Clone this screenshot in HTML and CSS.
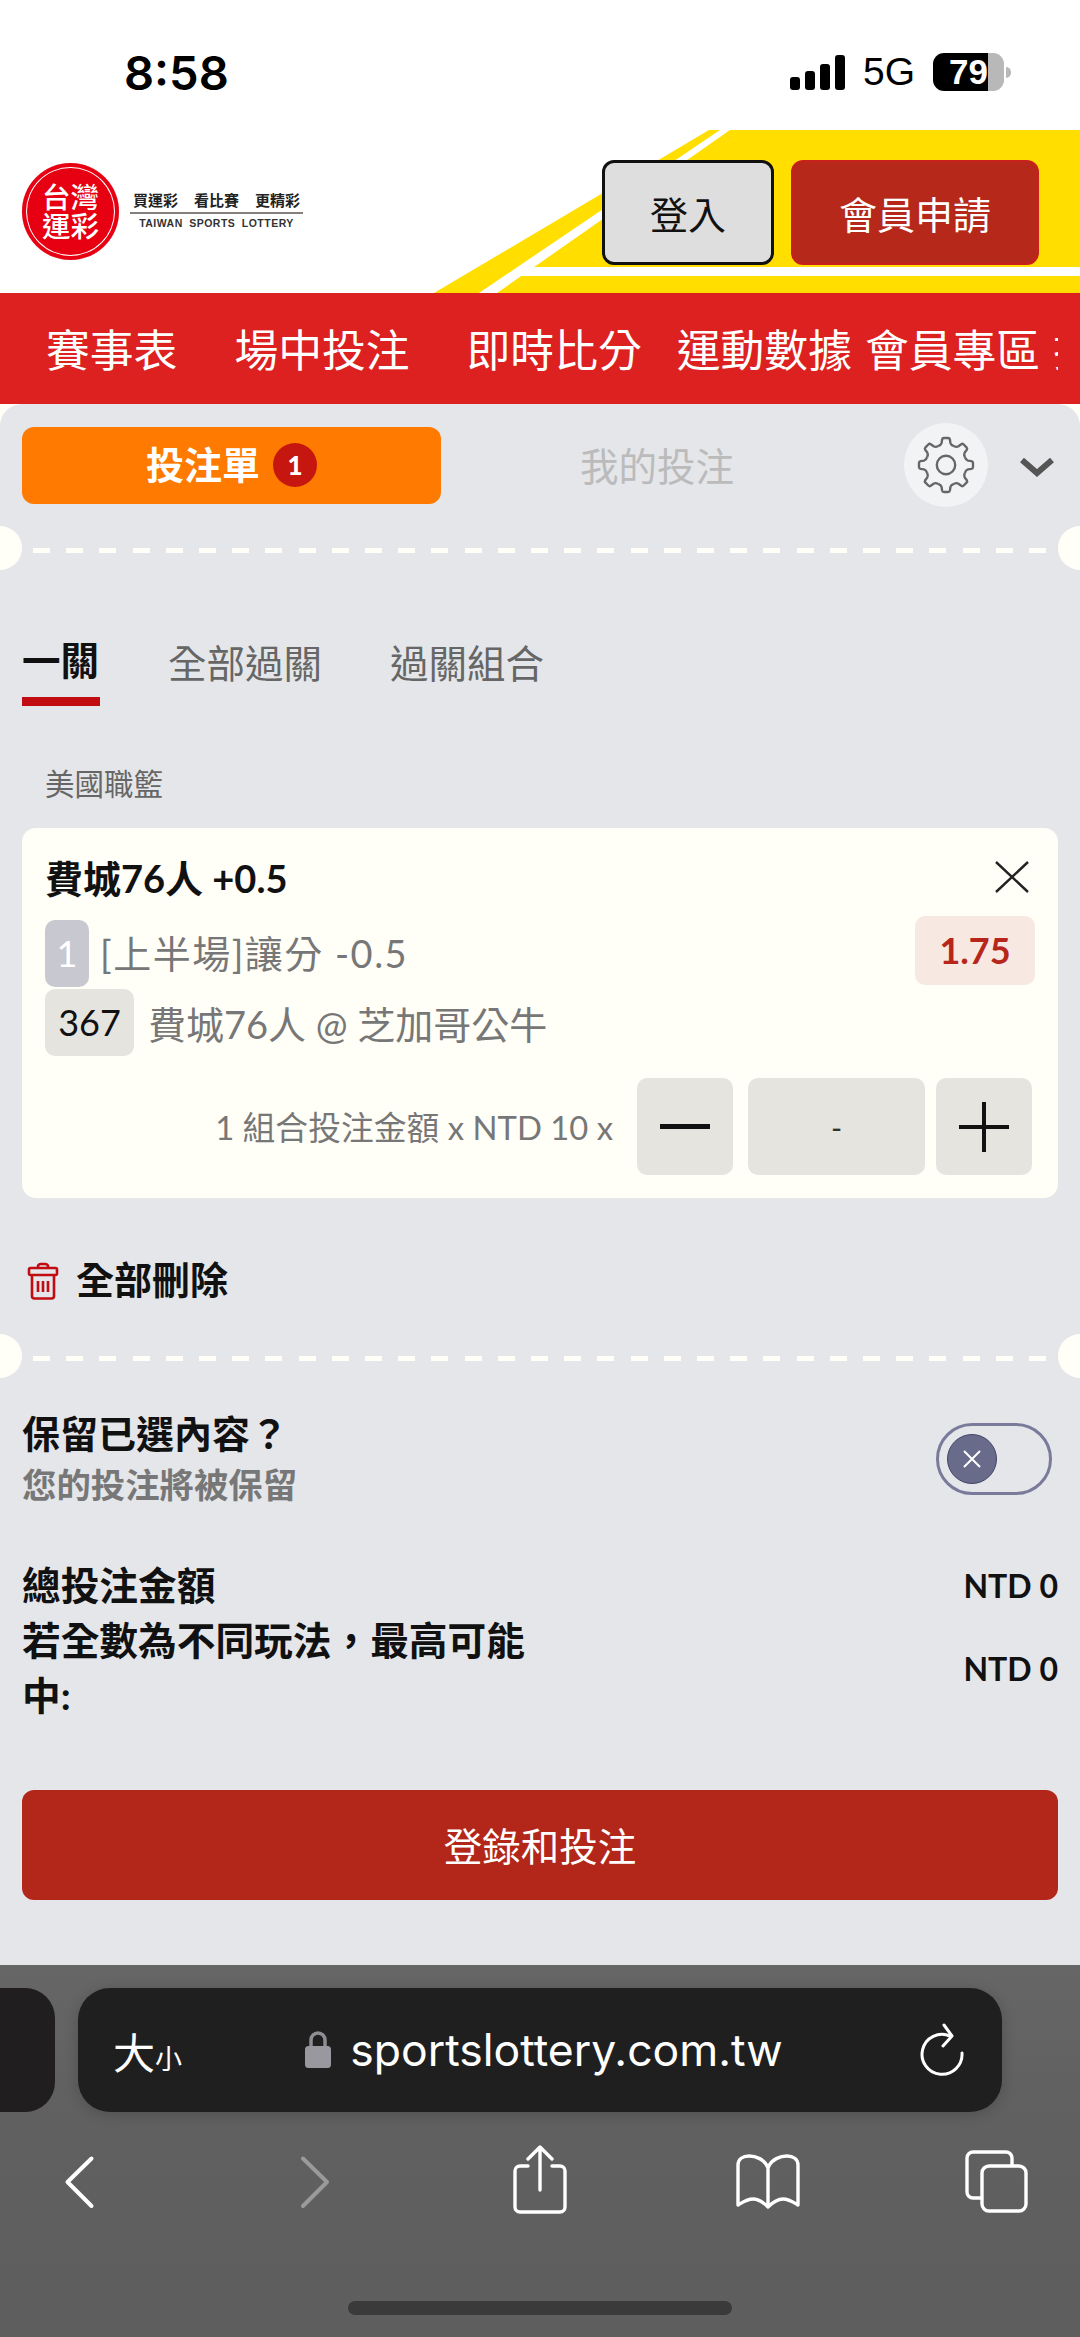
FILE: index.html
```html
<!DOCTYPE html>
<html lang="zh-Hant">
<head>
  <meta charset="UTF-8" />
  <title>台灣運彩 投注單</title>
  <link rel="stylesheet" href="styles.css">
</head>
<body>

  <div class="status-bar">
    <span class="clock">8:58</span>
    <div class="status-right">
      <div class="signal">
        <i class="bar-1"></i><i class="bar-2"></i><i class="bar-3"></i><i class="bar-4"></i>
      </div>
      <span class="network">5G</span>
      <div class="battery"><span>79</span></div>
      <i class="battery-tip"></i>
    </div>
  </div>

  <header class="site-header">
    <svg class="header-art" width="1080" height="163" viewBox="0 0 1080 163">
      <polygon points="709,0 720,0 479,163 434,163" fill="#ffde00" />
      <polygon points="730,0 1080,0 1080,163 497,163" fill="#ffde00" />
      <polygon points="527,137 1080,137 1080,146 515,146" fill="#fff" />
    </svg>
    <div class="logo">
      <div class="logo-mark"><span>台灣</span><span>運彩</span></div>
      <div class="logo-text">
        <div class="logo-slogan"><span>買運彩</span><span>看比賽</span><span>更精彩</span></div>
        <div class="logo-en">TAIWAN SPORTS LOTTERY</div>
      </div>
    </div>
    <div class="header-actions">
      <button class="btn-login">登入</button>
      <button class="btn-join">會員申請</button>
    </div>
  </header>

  <nav class="main-nav">
    <a class="nav-wide">賽事表</a>
    <a class="nav-wide">場中投注</a>
    <a class="nav-mid">即時比分</a>
    <a class="nav-tight">運動數據</a>
    <a class="nav-tight">會員專區</a>
    <a>投注記錄</a>
  </nav>

  <main class="slip">
    <div class="slip-tabs">
      <div class="slip-tab-active"><span>投注單</span><b class="count">1</b></div>
      <div class="slip-tab">我的投注</div>
      <div class="gear">
        <svg width="60" height="60" viewBox="-30 -30 60 60" fill="none" stroke="#666" stroke-width="2.4">
          <defs>
            <path id="tooth" d="M-7.85-18.94Q-5-19.8-4.4-22L-3.9-25.5Q-3.6-27-2-27H2Q3.6-27 3.9-25.5L4.4-22Q5-19.8 7.85-18.94" />
          </defs>
          <use href="#tooth" />
          <use href="#tooth" transform="rotate(45)" />
          <use href="#tooth" transform="rotate(90)" />
          <use href="#tooth" transform="rotate(135)" />
          <use href="#tooth" transform="rotate(180)" />
          <use href="#tooth" transform="rotate(225)" />
          <use href="#tooth" transform="rotate(270)" />
          <use href="#tooth" transform="rotate(315)" />
          <circle r="9.2" />
        </svg>
      </div>
      <svg class="chevron" width="34" height="20" viewBox="0 0 34 20" fill="none" stroke="#555" stroke-width="6">
        <path d="M2 3L17 16L32 3" />
      </svg>
    </div>

    <div class="divider first"></div>

    <div class="bet-types">
      <div class="bet-type-active">一關</div>
      <div class="bet-type">全部過關</div>
      <div class="bet-type">過關組合</div>
    </div>

    <div class="league">美國職籃</div>

    <section class="bet-card">
      <div class="bet-title-row">
        <div class="bet-title">費城76人 +0.5</div>
        <svg width="36" height="34" viewBox="0 0 36 34" fill="none" stroke="#222" stroke-width="2.4">
          <path d="M2 2L34 32M34 2L2 32" />
        </svg>
      </div>
      <div class="bet-row">
        <span class="tag tag-period">1</span>
        <span class="bet-market spaced">[上半場]讓分 -0.5</span>
        <span class="odds">1.75</span>
      </div>
      <div class="bet-row second">
        <span class="tag tag-game">367</span>
        <span class="bet-market">費城76人 @ 芝加哥公牛</span>
      </div>
      <div class="stake-row">
        <span class="stake-label">1 組合投注金額 x NTD 10 x</span>
        <div class="stake-btn">
          <svg width="50" height="6" viewBox="0 0 50 6"><rect width="50" height="5" fill="#111" /></svg>
        </div>
        <div class="stake-value">-</div>
        <div class="stake-btn">
          <svg width="50" height="50" viewBox="0 0 50 50"><path d="M0 25H50M25 0V50" stroke="#111" stroke-width="4" /></svg>
        </div>
      </div>
    </section>

    <div class="delete-all">
      <svg width="32" height="38" viewBox="0 0 32 38" fill="none" stroke="#c00d12" stroke-width="2.6">
        <path d="M11 6V4a3 3 0 0 1 3-2h4a3 3 0 0 1 3 2V6" />
        <rect x="2" y="6" width="28" height="7" rx="1.5" />
        <path d="M5 13V34a2.500 2.500 0 0 0 2.500 2.500H24.500A2.500 2.500 0 0 0 27 34V13" />
        <path d="M11 19V30M16 19V30M21 19V30" />
      </svg>
      <span>全部刪除</span>
    </div>

    <div class="divider"></div>

    <div class="keep-row">
      <div>
        <div class="keep-title">保留已選內容？</div>
        <div class="keep-sub">您的投注將被保留</div>
      </div>
      <div class="toggle">
        <div class="toggle-knob">
          <svg width="20" height="20" viewBox="0 0 20 20" stroke="#fff" stroke-width="2"><path d="M2 2L18 18M18 2L2 18" /></svg>
        </div>
      </div>
    </div>

    <div class="totals">
      <div class="total-row">
        <div class="total-label">總投注金額</div>
        <div class="total-value">NTD 0</div>
      </div>
      <div class="total-row">
        <div class="total-label">若全數為不同玩法，最高可能中:</div>
        <div class="total-value">NTD 0</div>
      </div>
    </div>

    <button class="submit">登錄和投注</button>
  </main>

  <footer class="browser-bar">
    <div class="address-row">
      <div class="prev-tab"></div>
      <div class="address">
        <span class="text-size">大<small>小</small></span>
        <div class="url">
          <svg width="26" height="38" viewBox="0 0 26 38">
            <path d="M6 17V9a7 7 0 0 1 14 0V17" fill="none" stroke="#8d8d92" stroke-width="3.5" />
            <rect y="15" width="26" height="22" rx="3.500" fill="#98989e" />
          </svg>
          <span>sportslottery.com.tw</span>
        </div>
        <svg width="46" height="54" viewBox="0 0 46 54" fill="none" stroke="#fff" stroke-width="3" stroke-linecap="round" stroke-linejoin="round">
          <path d="M30 13A20 20 0 1 0 42 30" />
          <path d="M24 2L32 13L23 23" />
        </svg>
      </div>
    </div>
    <div class="toolbar">
      <svg width="66" height="70" viewBox="0 0 66 70" fill="none" stroke="#fff" stroke-width="4" stroke-linecap="round" stroke-linejoin="round">
        <path d="M44.500 13.500L20.500 37L44.500 61" />
      </svg>
      <svg width="66" height="70" viewBox="-6 0 66 70" fill="none" stroke="#9a9a9a" stroke-width="4" stroke-linecap="round" stroke-linejoin="round">
        <path d="M21 13.500L45 37L21 61" />
      </svg>
      <svg width="66" height="70" viewBox="-2 0 66 70" fill="none" stroke="#fff" stroke-width="3.400" stroke-linecap="round" stroke-linejoin="round">
        <path d="M33 45V3M21 14L33 2L45 14" />
        <path d="M21 21H13a5 5 0 0 0-5 5V62a5 5 0 0 0 5 5H53a5 5 0 0 0 5-5V26a5 5 0 0 0-5-5H45" />
      </svg>
      <svg width="66" height="70" viewBox="-1 0 66 70" fill="none" stroke="#fff" stroke-width="3.400" stroke-linecap="round" stroke-linejoin="round">
        <path d="M33 23C30 14 20 11 14 11C8 11 3 14 3 20V60C8 57 12 54 18 54C24 54 29 58 33 62C37 58 42 54 48 54C54 54 58 57 63 60V20C63 14 58 11 52 11C46 11 36 14 33 23ZM33 23V62" />
      </svg>
      <svg width="66" height="70" viewBox="0 0 66 70" fill="none" stroke="#fff" stroke-width="3.400" stroke-linecap="round" stroke-linejoin="round">
        <path d="M18 53H10a6 6 0 0 1-6-6V13a6 6 0 0 1 6-6H43a6 6 0 0 1 6 6V20" />
        <rect x="19" y="21" width="44" height="45" rx="7" />
      </svg>
    </div>
    <div class="home-indicator"></div>
  </footer>

</body>
</html>
```

FILE: styles.css
```css
* {
  box-sizing: border-box;
}
body {
  margin: 0;
  width: 1080px;
  height: 2337px;
  overflow: hidden;
  background: #fffef7;
  font-family: Lato, "Noto Sans CJK TC", sans-serif;
  color: #111;
}
button {
  font-family: inherit;
  cursor: pointer;
}

/* status bar */
.status-bar {
  display: flex;
  justify-content: space-between;
  align-items: center;
  height: 130px;
  padding: 14px 69px 0 124px;
  background: #fff;
}
.clock {
  font-family: Inter, sans-serif;
  font-weight: 600;
  font-size: 47px;
  color: #000;
}
.status-right {
  display: flex;
  align-items: center;
}
.signal {
  display: flex;
  align-items: flex-end;
  gap: 5px;
  height: 35px;
  margin-right: 18px;
}
.signal i {
  display: block;
  width: 10px;
  background: #000;
  border-radius: 3px;
}
.bar-1 { height: 13px; }
.bar-2 { height: 19px; }
.bar-3 { height: 26px; }
.bar-4 { height: 35px; }
.network {
  font-family: "Liberation Sans", sans-serif;
  font-size: 39px;
  line-height: 40px;
  color: #000;
  margin-right: 18px;
}
.battery {
  width: 71px;
  height: 38px;
  border-radius: 11px;
  overflow: hidden;
  background: linear-gradient(90deg, #000 55px, #b8b8b8 55px);
  color: #fff;
  font-family: "Liberation Sans", sans-serif;
  font-weight: 700;
  font-size: 35px;
  line-height: 38px;
  padding-left: 16px;
}
.battery-tip {
  width: 5px;
  height: 11px;
  margin-left: 2px;
  background: #b8b8b8;
  border-radius: 0 5px 5px 0;
}

/* site header */
.site-header {
  position: relative;
  display: flex;
  justify-content: space-between;
  height: 163px;
  padding: 30px 41px 0 22px;
  background: #fff;
}
.header-art {
  position: absolute;
  left: 0;
  top: 0;
}
.logo {
  position: relative;
  display: flex;
  align-items: flex-start;
  padding-top: 3px;
}
.logo-mark {
  display: flex;
  flex-direction: column;
  align-items: center;
  justify-content: center;
  width: 97px;
  height: 97px;
  border-radius: 50%;
  background: #e60012;
  box-shadow: inset 0 0 0 4px #e60012, inset 0 0 0 5px #fff;
  color: #fff;
  font-size: 28.500px;
  line-height: 29px;
  font-weight: 500;
}
.logo-text {
  width: 173px;
  margin: 27px 0 0 11px;
}
.logo-slogan {
  display: flex;
  justify-content: space-between;
  padding: 0 3px 2px;
  font-size: 15px;
  line-height: 20px;
  font-weight: 700;
  color: #222;
  border-bottom: 2px solid #857f7c;
}
.logo-en {
  font-family: "Liberation Sans", sans-serif;
  font-weight: 700;
  font-size: 10.500px;
  letter-spacing: 0.5px;
  word-spacing: 3px;
  line-height: 18px;
  text-align: center;
  white-space: nowrap;
  color: #333;
}
.header-actions {
  position: relative;
  display: flex;
  gap: 17px;
}
.btn-login,
.btn-join {
  height: 105px;
  border-radius: 12px;
  font-size: 38px;
  padding: 0;
}
.btn-login {
  width: 172px;
  background: #dedede;
  border: 3px solid #111;
  color: #111;
}
.btn-join {
  width: 248px;
  background: #b5281a;
  border: 2px solid #c9201c;
  color: #fff;
}

/* red nav */
.main-nav {
  display: flex;
  align-items: center;
  height: 111px;
  padding: 0 0 2px 46px;
  margin-right: 22px;
  background: #dd2020;
  overflow: hidden;
  white-space: nowrap;
  box-shadow: 22px 0 0 #dd2020;
  color: #fff;
  font-size: 43.800px;
}
.main-nav a {
  flex: none;
}
.nav-wide { margin-right: 57px; }
.nav-mid { margin-right: 35px; }
.nav-tight { margin-right: 13px; }

/* bet slip sheet */
.slip {
  height: 1561px;
  background: #e4e6e9;
  border-radius: 22px 22px 0 0;
  overflow: hidden;
}
.slip-tabs {
  display: flex;
  align-items: center;
  height: 84px;
  margin-top: 19px;
  padding-left: 22px;
}
.slip-tab-active {
  display: flex;
  justify-content: center;
  align-items: center;
  gap: 13px;
  width: 419px;
  height: 77px;
  border-radius: 12px;
  background: #ff7a00;
  color: #fff;
  font-size: 38px;
  font-weight: 700;
}
.slip-tab-active span {
  margin-bottom: 5px;
}
.count {
  width: 44px;
  height: 44px;
  border-radius: 50%;
  background: #c5170f;
  font-size: 26px;
  line-height: 44px;
  text-align: center;
}
.slip-tab {
  width: 432px;
  margin-bottom: 3px;
  text-align: center;
  font-size: 38.500px;
  color: #bbb;
}
.gear {
  display: flex;
  justify-content: center;
  align-items: center;
  width: 84px;
  height: 84px;
  margin-left: 31px;
  border-radius: 50%;
  background: #f2f3f4;
}
.chevron {
  margin: 4px 0 0 32px;
}
.divider {
  position: relative;
  height: 5px;
  margin-top: 50px;
  background: repeating-linear-gradient(90deg, #fffef7 0, #fffef7 17px, transparent 17px, transparent 33.200px) 33px 0 / 1015px 5px no-repeat;
}
.divider.first {
  margin-top: 41px;
}
.divider::before,
.divider::after {
  content: "";
  position: absolute;
  top: -22px;
  width: 44px;
  height: 44px;
  border-radius: 50%;
  background: #fffef7;
}
.divider::before { left: -22px; }
.divider::after { right: -22px; }

.bet-types {
  display: flex;
  gap: 68px;
  margin: 80px 22px 0;
  height: 73px;
  font-size: 38.500px;
}
.bet-type-active {
  width: 78px;
  height: 73px;
  line-height: 54px;
  padding-bottom: 10px;
  border-bottom: 9px solid #c10d12;
  font-weight: 700;
  white-space: nowrap;
}
.bet-type {
  line-height: 60px;
  color: #666;
}
.league {
  margin: 58px 0 0 45px;
  font-size: 29.500px;
  line-height: 40px;
  color: #666;
}
.bet-card {
  height: 370px;
  margin: 24px 22px 0;
  padding: 24px 23px 0;
  border-radius: 14px;
  background: #fffef7;
}
.bet-title-row {
  display: flex;
  justify-content: space-between;
  align-items: center;
  padding-right: 5px;
  height: 50px;
}
.bet-title {
  margin-bottom: 2px;
  font-size: 38px;
  font-weight: 700;
}
.bet-row {
  display: flex;
  align-items: center;
  margin-top: 14px;
  height: 71px;
  color: #777;
  font-size: 38px;
}
.bet-row.second {
  margin-top: 2px;
  height: 67px;
}
.bet-market.spaced {
  letter-spacing: 1.500px;
}
.tag {
  height: 67px;
  border-radius: 10px;
  text-align: center;
  line-height: 67px;
  font-size: 36px;
  margin-right: 14px;
}
.tag-period {
  width: 44px;
  margin: 4px 11px 0 0;
  background: #c8c8d0;
  color: #fff;
}
.tag-game {
  width: 89px;
  background: #e6e4df;
  color: #111;
}
.odds {
  width: 120px;
  height: 69px;
  margin-left: auto;
  margin-top: -2px;
  border-radius: 10px;
  background: #f8e8e2;
  color: #b7261a;
  font-size: 36px;
  font-weight: 700;
  line-height: 69px;
  text-align: center;
}
.stake-row {
  display: flex;
  justify-content: flex-end;
  align-items: center;
  margin-top: 22px;
  padding-right: 3px;
}
.stake-label {
  margin: 0 24px 2px 0;
  font-size: 32.800px;
  color: #777;
}
.stake-btn,
.stake-value {
  display: flex;
  justify-content: center;
  align-items: center;
  height: 97px;
  border-radius: 10px;
  background: #e6e4df;
}
.stake-btn {
  width: 96px;
}
.stake-value {
  width: 177px;
  margin: 0 11px 0 15px;
  font-size: 30px;
  color: #333;
}
.delete-all {
  display: flex;
  align-items: center;
  gap: 17px;
  height: 50px;
  margin: 58px 0 0 27px;
  font-size: 38px;
  font-weight: 700;
}
.delete-all span {
  margin-bottom: 8px;
}
.keep-row {
  display: flex;
  justify-content: space-between;
  align-items: center;
  margin: 46px 28px 0 22px;
}
.keep-title {
  font-size: 38px;
  line-height: 52px;
  font-weight: 700;
}
.keep-sub {
  font-size: 34.400px;
  line-height: 52px;
  font-weight: 700;
  color: #777;
}
.toggle {
  width: 116px;
  height: 72px;
  padding: 8px;
  border: 3px solid #7a7a9a;
  border-radius: 36px;
}
.toggle-knob {
  display: flex;
  justify-content: center;
  align-items: center;
  width: 50px;
  height: 50px;
  border-radius: 50%;
  background: #686b8a;
  border: 1px solid #44466a;
}
.totals {
  margin: 47px 22px 0;
}
.total-row {
  display: flex;
  justify-content: space-between;
  align-items: center;
}
.total-label {
  width: 530px;
  font-size: 38.700px;
  line-height: 55px;
  font-weight: 700;
}
.total-value {
  font-size: 32px;
  font-weight: 700;
}
.submit {
  display: block;
  width: 1036px;
  height: 110px;
  margin: 67px 22px 0;
  padding-bottom: 4px;
  border: none;
  border-radius: 12px;
  background: #b3261a;
  color: #fff;
  font-size: 38.500px;
}

/* safari bottom bar */
.browser-bar {
  height: 372px;
  padding-top: 23px;
  background: linear-gradient(180deg, #666 0, #606060 40%, #5e5e5e 100%);
}
.address-row {
  display: flex;
  gap: 23px;
}
.prev-tab {
  width: 55px;
  height: 124px;
  border-radius: 0 30px 30px 0;
  background: #201e1e;
}
.address {
  display: flex;
  justify-content: space-between;
  align-items: center;
  width: 924px;
  height: 124px;
  padding: 0 36px 0 35px;
  border-radius: 32px;
  background: #1f1f1f;
  box-shadow: 0 2px 14px rgba(0,0,0,0.18);
  color: #fff;
}
.text-size {
  width: 67px;
  font-size: 42px;
  white-space: nowrap;
}
.text-size small {
  font-size: 27px;
}
.url {
  display: flex;
  align-items: center;
  gap: 19px;
  margin-right: 12px;
  font-family: Inter, sans-serif;
  font-size: 44.500px;
}
.toolbar {
  display: flex;
  justify-content: space-between;
  margin-top: 33px;
  padding: 0 51px 0 47px;
}
.home-indicator {
  width: 384px;
  height: 14px;
  margin: 86px auto 0;
  border-radius: 7px;
  background: #3a3a3a;
}
```
